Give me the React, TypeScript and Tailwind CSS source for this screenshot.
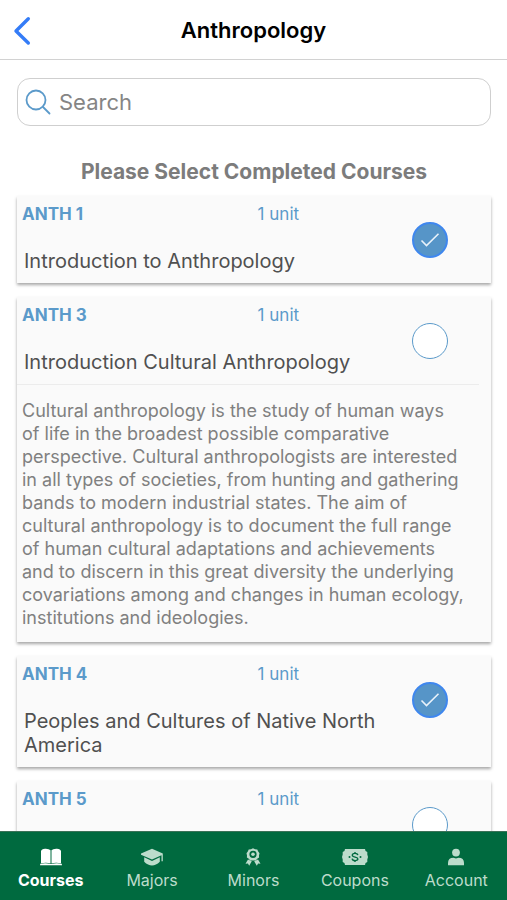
import { useState } from "react";

type Course = {
  code: string;
  units: string;
  title: string;
  done: boolean;
  description?: string;
};

const COURSES: Course[] = [
  { code: "ANTH 1", units: "1 unit", title: "Introduction to Anthropology", done: true },
  {
    code: "ANTH 3",
    units: "1 unit",
    title: "Introduction Cultural Anthropology",
    done: false,
    description:
      "Cultural anthropology is the study of human ways of life in the broadest possible comparative perspective. Cultural anthropologists are interested in all types of societies, from hunting and gathering bands to modern industrial states. The aim of cultural anthropology is to document the full range of human cultural adaptations and achievements and to discern in this great diversity the underlying covariations among and changes in human ecology, institutions and ideologies.",
  },
  { code: "ANTH 4", units: "1 unit", title: "Peoples and Cultures of Native North America", done: true },
  { code: "ANTH 5", units: "1 unit", title: "", done: false },
];

const TABS = [
  { label: "Courses", Icon: BookIcon },
  { label: "Majors", Icon: CapIcon },
  { label: "Minors", Icon: AwardIcon },
  { label: "Coupons", Icon: CouponIcon },
  { label: "Account", Icon: PersonIcon },
];

export default function App() {
  const [courses, setCourses] = useState(COURSES);
  const [query, setQuery] = useState("");
  const [tab, setTab] = useState("Courses");

  const toggle = (code: string) =>
    setCourses((list) => list.map((c) => (c.code === code ? { ...c, done: !c.done } : c)));

  const shown = courses.filter((c) =>
    `${c.code} ${c.title}`.toLowerCase().includes(query.toLowerCase())
  );

  return (
    <div className="flex h-screen flex-col bg-white font-['Inter','Liberation_Sans',sans-serif]">
      <header className="grid h-15 shrink-0 grid-cols-[1fr_auto_1fr] items-center border-b border-[#d2d2d2] px-3 pt-0.5">
        <button aria-label="Back" className="justify-self-start">
          <svg viewBox="0 0 20 30" className="h-[30px] w-5" fill="none" stroke="#347cf7" strokeWidth="3.4" strokeLinecap="round" strokeLinejoin="round">
            <path d="M16.300 2.800 4 15l12.300 12" />
          </svg>
        </button>
        <h1 className="text-[22px] font-semibold text-black">Anthropology</h1>
      </header>

      <main className="min-h-0 flex-1 overflow-hidden pt-[18px] pr-4 pl-[17px]">
        <label className="flex h-12 items-center gap-2 rounded-[13px] border border-[#cfcfcf] pl-[7px]">
          <SearchIcon />
          <input
            type="text"
            aria-label="Search"
            placeholder="Search"
            value={query}
            onChange={(e) => setQuery(e.target.value)}
            className="min-w-0 flex-1 bg-transparent text-[22px] text-[#444] outline-none placeholder:text-[#858585]"
          />
        </label>

        <h2 className="mt-7 mb-2 pt-0.5 text-center text-[21px] leading-8 font-bold text-[#7c7c7c]">
          Please Select Completed Courses
        </h2>

        <div className="space-y-3.5">
          {shown.map((course) => (
            <CourseCard key={course.code} course={course} onToggle={() => toggle(course.code)} />
          ))}
        </div>
      </main>

      <nav className="grid h-[69px] shrink-0 grid-cols-5 border-t border-[#3b7157] bg-[#006a3f]">
        {TABS.map(({ label, Icon }) => (
          <button
            key={label}
            onClick={() => setTab(label)}
            className={`flex flex-col items-center gap-0.5 pt-4 text-base leading-6 ${
              tab === label ? "font-bold text-white" : "text-[#bcdccb]"
            }`}
          >
            <Icon />
            {label}
          </button>
        ))}
      </nav>
    </div>
  );
}

function CourseCard({ course, onToggle }: { course: Course; onToggle: () => void }) {
  return (
    <article className="bg-[#fafafa] pb-2.5 shadow-[0_2px_3px_rgba(0,0,0,0.35)]">
      <div className="flex">
        <div className="min-w-0 flex-1">
          <div className="grid grid-cols-[66%_34%] pt-1.5 pl-[5px] text-[17px] leading-6 text-[#5b9aca]">
            <span className="font-bold">{course.code}</span>
            <span>{course.units}</span>
          </div>
          <h3 className="mt-[23px] min-h-6 pl-[7px] text-xl leading-6 text-[#505050]">{course.title}</h3>
        </div>
        <div className="w-28 shrink-0 pt-[26px] pl-[33px]">
          <input
            type="checkbox"
            aria-label={`${course.code} completed`}
            checked={course.done}
            onChange={onToggle}
            className="peer sr-only"
            id={course.code}
          />
          <label
            htmlFor={course.code}
            className={`flex size-9 cursor-pointer items-center justify-center rounded-full ${
              course.done ? "border-2 border-[#3f87ee] bg-[#5695c8]" : "border border-[#5b9aca] bg-white"
            }`}
          >
            {course.done && <CheckIcon />}
          </label>
        </div>
      </div>
      {course.description && (
        <>
          <hr className="mt-2.5 mr-3 border-[#ececec]" />
          <p className="mt-3.5 mr-[26px] mb-[3px] pl-[5px] text-lg leading-[23px] text-[#808080]">{course.description}</p>
        </>
      )}
    </article>
  );
}

function SearchIcon() {
  return (
    <svg viewBox="0 0 26 26" className="size-[26px]" fill="none" stroke="#5b9aca" strokeWidth="1.8" strokeLinecap="round">
      <circle cx="11" cy="11" r="9.5" />
      <path d="m18 18 6.5 6.5" />
    </svg>
  );
}

function CheckIcon() {
  return (
    <svg viewBox="0 0 20 16" className="h-4 w-5" fill="none" stroke="#e9f2fa" strokeWidth="1.6">
      <path d="m1.500 8.500 5 5L18.500 1.700" />
    </svg>
  );
}

function BookIcon() {
  return (
    <svg viewBox="0 0 24 18" className="h-[18px] w-6" fill="currentColor">
      <path d="M2 3Q2.500 1 6 .700q4-.2 5.500 1.500V15.500Q7.500 13.900 2 15.300Z" />
      <path d="M22 3Q21.500 1 18 .700q-4-.2-5.500 1.500V15.500Q16.500 13.900 22 15.300Z" />
      <path d="M1.300 15.700Q7.500 14.600 11.300 16.100h1.400Q16.500 14.600 22.700 15.700L23 17.300H1Z" />
    </svg>
  );
}

function CapIcon() {
  return (
    <svg viewBox="0 0 24 18" className="h-[18px] w-6" fill="currentColor">
      <path d="M12 .700 1 5.500v1.200l11 4.800 9.500-4.200v6h1.300V5.500Z" />
      <path d="M4.200 9.300v4.500Q8 17.600 12 17.600t7.800-3.800V9.300L12 13Z" />
    </svg>
  );
}

function AwardIcon() {
  return (
    <svg viewBox="0 0 24 18" className="h-[18px] w-6" fill="currentColor">
      <path fillRule="evenodd" d="m12 .300 2 .9 2.300.300.900 2.100 1.300 1.700-.5 2.200.1 2.100-1.900 1.200-1.400 1.600-2.800.2-2.800-.2-1.400-1.600L5.900 9.600 6 7.500l-.5-2.200 1.300-1.700.9-2.100L10 1.200ZM12 2.700a3.600 3.600 0 1 0 0 7.200A3.600 3.600 0 0 0 12 2.700Z" />
      <circle cx="12" cy="6.300" r="1.800" />
      <path d="m7 11.500-2.500 4.200 2.400-.1 1.300 2.200 2.600-4.500ZM17 11.500l2.500 4.200-2.400-.1-1.300 2.200-2.600-4.500Z" />
    </svg>
  );
}

function CouponIcon() {
  return (
    <svg viewBox="0 0 28 18" className="h-[18px] w-7">
      <path fill="currentColor" d="M4 1h20a3 3 0 0 0 2.300 3v2.500L27 9l-.7 2.500V14A3 3 0 0 0 24 17H4a3 3 0 0 0-2.300-3v-2.500L1 9l.7-2.500V4A3 3 0 0 0 4 1Z" />
      <path fill="none" stroke="#006a3f" strokeWidth="1.400" d="M16.800 7.200C16.300 4.700 11.300 4.700 11.300 7.200c0 2.400 5.600 1.400 5.600 3.700 0 2.300-5.400 2.300-5.800-.3M14 4v1.500M14 12.500V14" />
      <circle cx="8.500" cy="9" r="1" fill="#006a3f" />
      <circle cx="19.500" cy="9" r="1" fill="#006a3f" />
    </svg>
  );
}

function PersonIcon() {
  return (
    <svg viewBox="0 0 24 18" className="h-[18px] w-6" fill="currentColor">
      <circle cx="12" cy="4.600" r="3.900" />
      <path d="M4 17.300v-2.300q0-5.200 5.500-5.200l2.500.7 2.500-.7q5.500 0 5.500 5.200v2.300Z" />
    </svg>
  );
}
